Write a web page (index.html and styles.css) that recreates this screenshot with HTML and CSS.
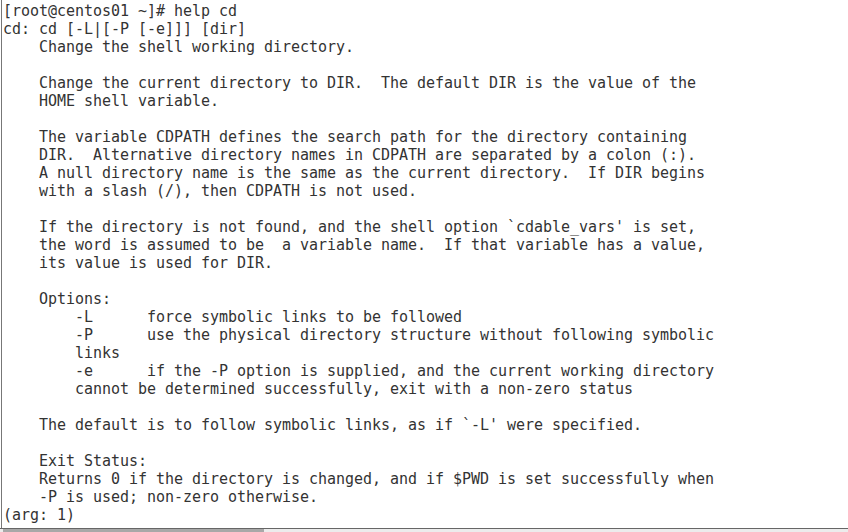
FILE: index.html
```html
<!DOCTYPE html>
<html>
<head>
<meta charset="utf-8">
<link rel="stylesheet" href="styles.css">
</head>
<body>
<div class="window">
<pre class="term">[root@centos01 ~]# help cd
cd: cd [-L|[-P [-e]]] [dir]
    Change the shell working directory.

    Change the current directory to DIR.  The default DIR is the value of the
    HOME shell variable.

    The variable CDPATH defines the search path for the directory containing
    DIR.  Alternative directory names in CDPATH are separated by a colon (:).
    A null directory name is the same as the current directory.  If DIR begins
    with a slash (/), then CDPATH is not used.

    If the directory is not found, and the shell option `cdable_vars' is set,
    the word is assumed to be  a variable name.  If that variable has a value,
    its value is used for DIR.

    Options:
        -L      force symbolic links to be followed
        -P      use the physical directory structure without following symbolic
        links
        -e      if the -P option is supplied, and the current working directory
        cannot be determined successfully, exit with a non-zero status

    The default is to follow symbolic links, as if `-L' were specified.

    Exit Status:
    Returns 0 if the directory is changed, and if $PWD is set successfully when
    -P is used; non-zero otherwise.
(arg: 1)</pre>
<div class="scroll"><div class="thumb"></div></div>
</div>
</body>
</html>
```
FILE: styles.css
```css
html, body {
  margin: 0;
  padding: 0;
  background: #ffffff;
}
.window {
  width: 848px;
  height: 532px;
  display: flex;
  flex-direction: column;
  overflow: hidden;
}
.term {
  margin: 0 0 0 1px;
  border-left: 1px solid #777;
  height: 528px;
  box-sizing: border-box;
  padding: 2px 0 0 1px;
  font-family: "DejaVu Sans Mono", monospace;
  font-size: 15px;
  letter-spacing: -0.03px;
  line-height: 18px;
  color: #333;
  white-space: pre;
  overflow: hidden;
}
.scroll {
  height: 4px;
  border-top: 1px solid #666;
  box-sizing: border-box;
  background: #ececec;
  display: flex;
}
.thumb {
  width: 261px;
  margin-left: 3px;
  background: #a8a8a8;
}
```
